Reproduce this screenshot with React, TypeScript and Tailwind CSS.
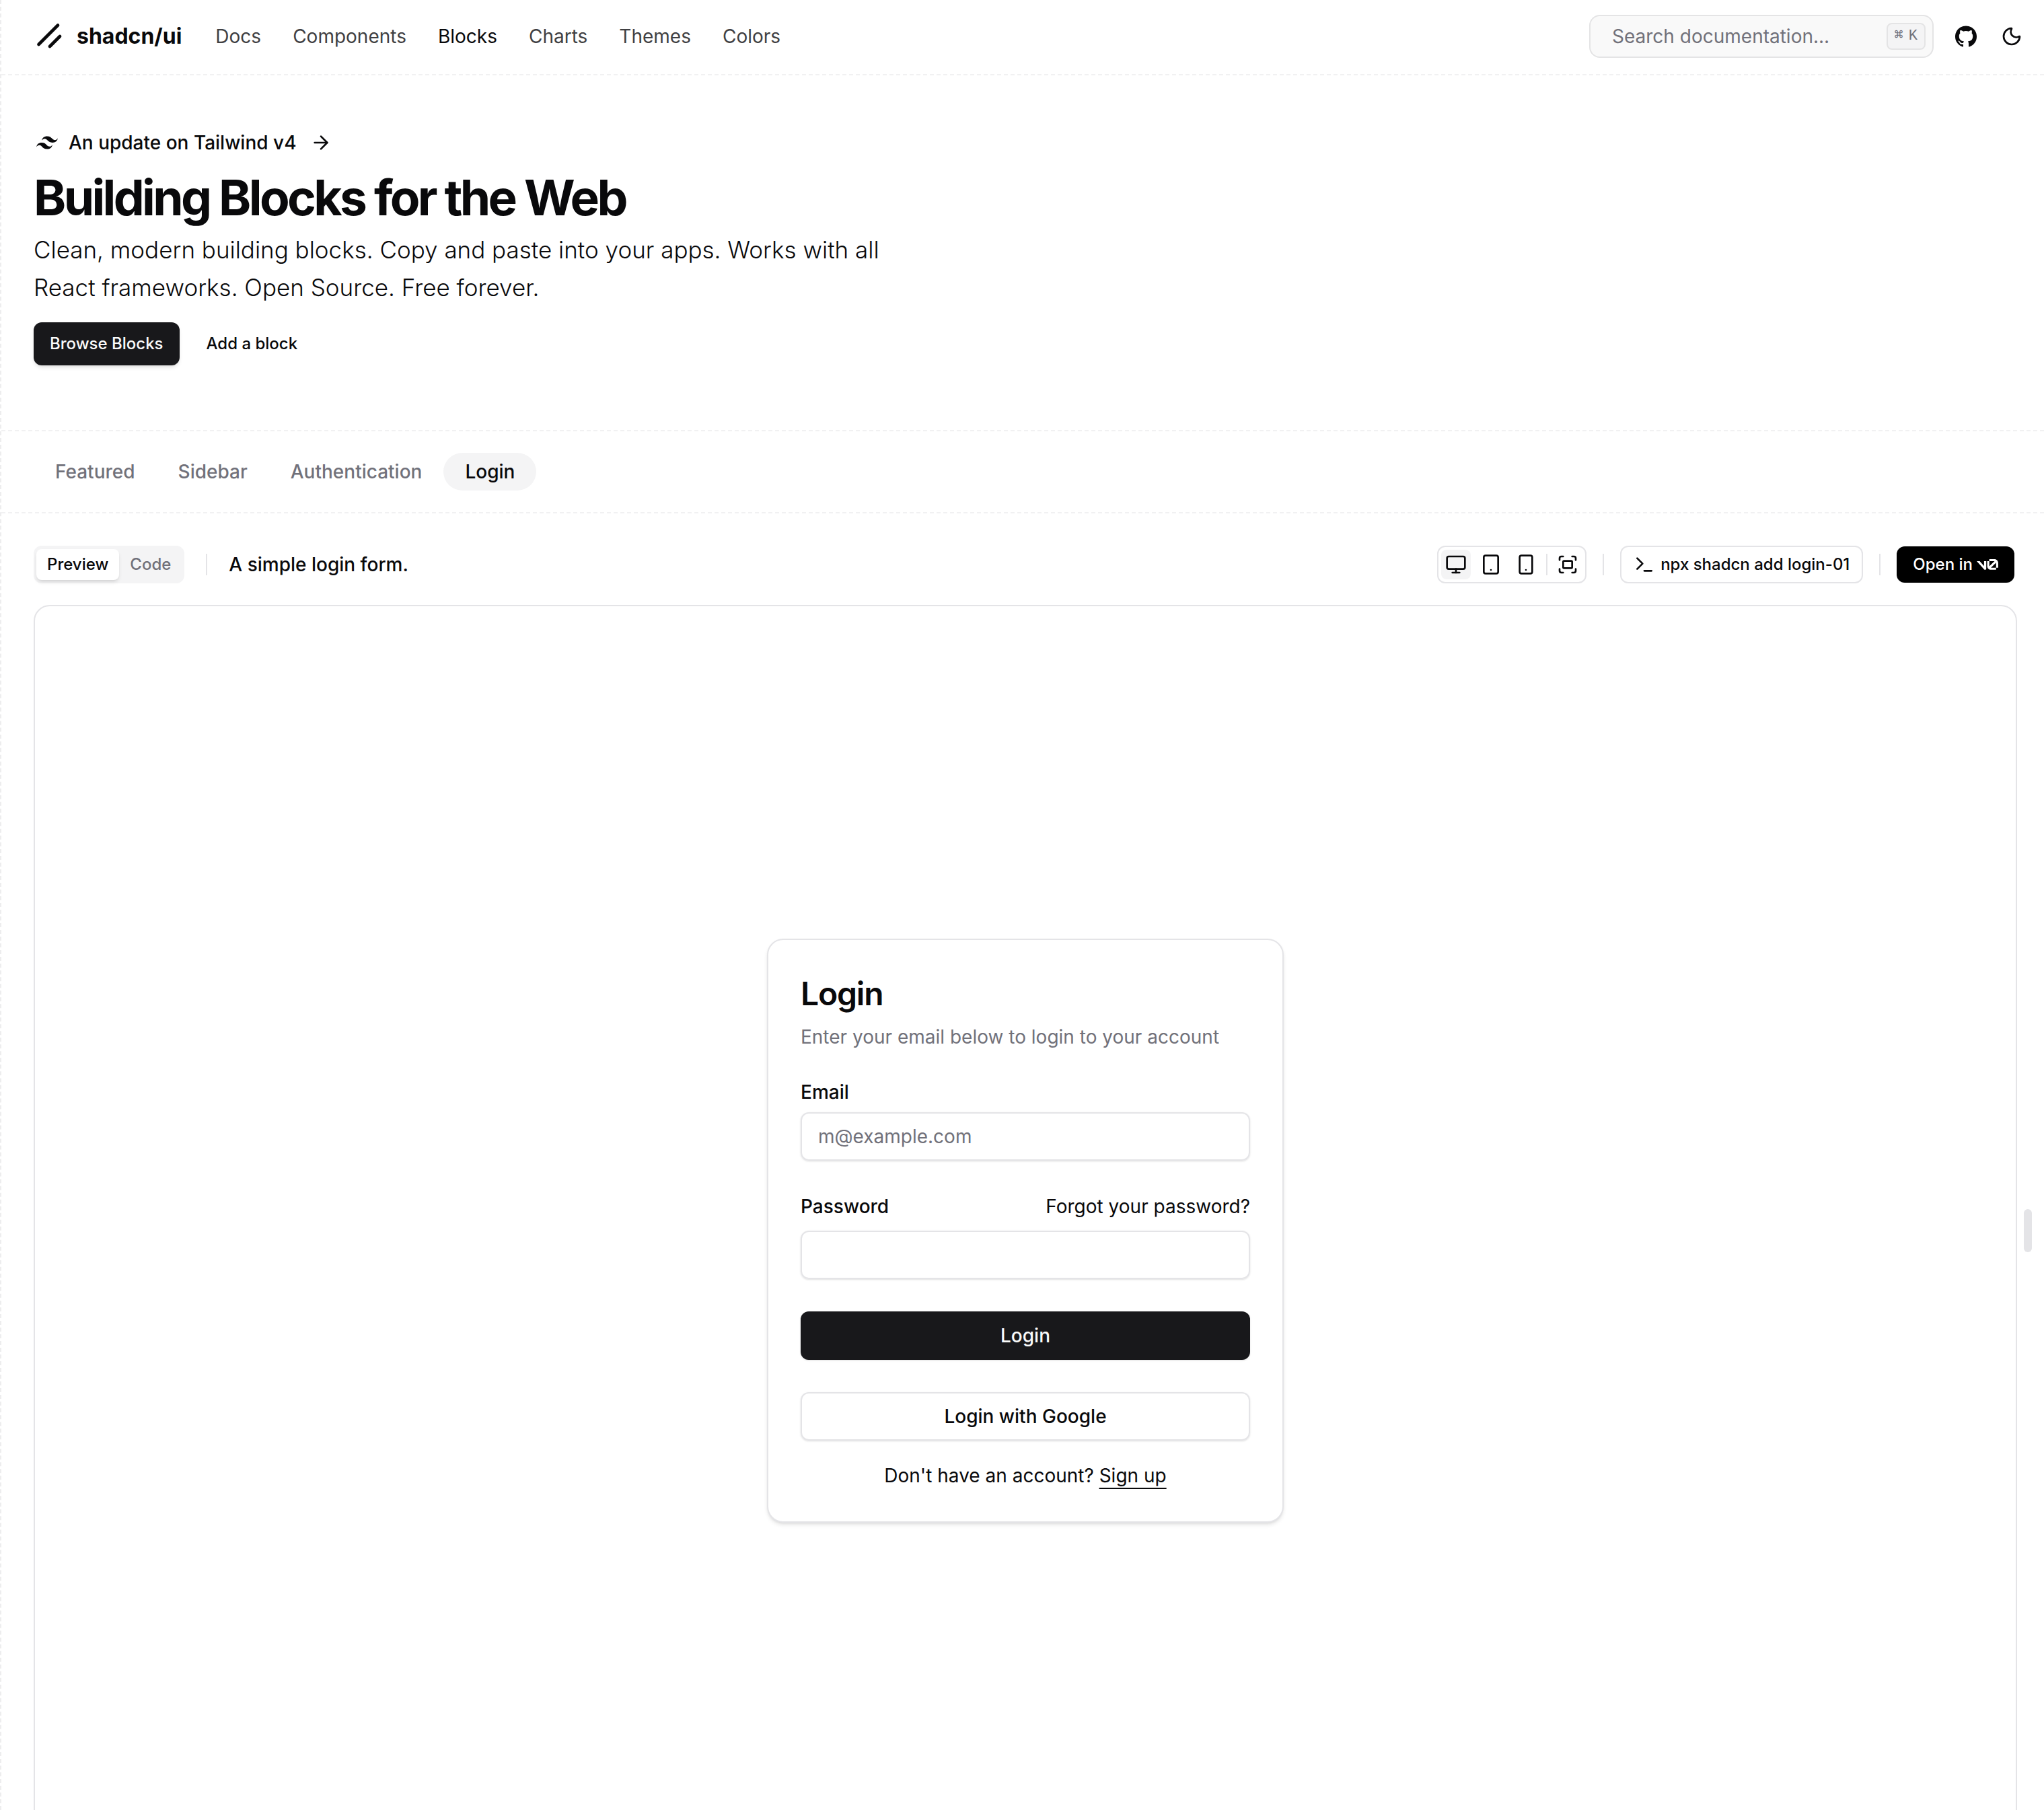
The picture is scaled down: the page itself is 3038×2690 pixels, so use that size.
import { ArrowRight, Fullscreen, Monitor, Moon, Smartphone, Tablet, Terminal } from "lucide-react";

const navLinks = ["Docs", "Components", "Blocks", "Charts", "Themes", "Colors"];
const categories = ["Featured", "Sidebar", "Authentication", "Login"];

function BrandMark() {
  return (
    <svg viewBox="0 0 256 256" className="size-12" fill="none" stroke="currentColor" strokeWidth="25" strokeLinecap="round" aria-hidden="true">
      <line x1="208" y1="128" x2="128" y2="208" />
      <line x1="192" y1="40" x2="40" y2="192" />
    </svg>
  );
}

function TailwindMark() {
  return (
    <svg viewBox="0 0 24 24" className="size-8" fill="currentColor" aria-hidden="true">
      <path d="M12.001,4.8c-3.2,0-5.2,1.6-6,4.8c1.2-1.6,2.6-2.2,4.2-1.8c0.913,0.228,1.565,0.89,2.288,1.624 C13.666,10.618,15.027,12,18.001,12c3.2,0,5.2-1.6,6-4.8c-1.2,1.6-2.6,2.2-4.2,1.8c-0.913-0.228-1.565-0.89-2.288-1.624 C16.337,6.182,14.976,4.8,12.001,4.8z M6.001,12c-3.2,0-5.2,1.6-6,4.8c1.2-1.6,2.6-2.2,4.2-1.8c0.913,0.228,1.565,0.89,2.288,1.624 c1.177,1.194,2.538,2.576,5.512,2.576c3.2,0,5.2-1.6,6-4.8c-1.2,1.6-2.6,2.2-4.2,1.8c-0.913-0.228-1.565-0.89-2.288-1.624 C10.337,13.382,8.976,12,6.001,12z" />
    </svg>
  );
}

function GitHubMark() {
  return (
    <svg viewBox="0 0 438.549 438.549" className="size-8" fill="currentColor" aria-hidden="true">
      <path d="M409.132 114.573c-19.608-33.596-46.205-60.194-79.798-79.8-33.598-19.607-70.277-29.408-110.063-29.408-39.781 0-76.472 9.804-110.063 29.408-33.596 19.605-60.192 46.204-79.8 79.8C9.803 148.168 0 184.854 0 224.63c0 47.78 13.94 90.745 41.827 128.906 27.884 38.164 63.906 64.572 108.063 79.227 5.14.954 8.945.283 11.419-1.996 2.475-2.282 3.711-5.14 3.711-8.562 0-.571-.049-5.708-.144-15.417a2549.81 2549.81 0 01-.144-25.406l-6.567 1.136c-4.187.767-9.469 1.092-15.846 1-6.374-.089-12.991-.757-19.842-1.999-6.854-1.231-13.229-4.086-19.13-8.559-5.898-4.473-10.085-10.328-12.56-17.556l-2.855-6.57c-1.903-4.374-4.899-9.233-8.992-14.559-4.093-5.331-8.232-8.945-12.419-10.848l-1.999-1.431c-1.332-.951-2.568-2.098-3.711-3.429-1.142-1.331-1.997-2.663-2.568-3.997-.572-1.335-.098-2.43 1.427-3.289 1.525-.859 4.281-1.276 8.28-1.276l5.708.853c3.807.763 8.516 3.042 14.133 6.851 5.614 3.806 10.229 8.754 13.846 14.842 4.38 7.806 9.657 13.754 15.846 17.847 6.184 4.093 12.419 6.136 18.699 6.136 6.28 0 11.704-.476 16.274-1.423 4.565-.952 8.848-2.383 12.847-4.285 1.713-12.758 6.377-22.559 13.988-29.41-10.848-1.14-20.601-2.857-29.264-5.14-8.658-2.286-17.605-5.996-26.835-11.14-9.235-5.137-16.896-11.516-22.985-19.126-6.09-7.614-11.088-17.61-14.987-29.979-3.901-12.374-5.852-26.648-5.852-42.826 0-23.035 7.52-42.637 22.557-58.817-7.044-17.318-6.379-36.732 1.997-58.24 5.52-1.715 13.706-.428 24.554 3.853 10.85 4.283 18.794 7.952 23.84 10.994 5.046 3.041 9.089 5.618 12.135 7.708 17.705-4.947 35.976-7.421 54.818-7.421s37.117 2.474 54.823 7.421l10.849-6.849c7.419-4.57 16.18-8.758 26.262-12.565 10.088-3.805 17.802-4.853 23.134-3.138 8.562 21.509 9.325 40.922 2.279 58.24 15.036 16.18 22.559 35.787 22.559 58.817 0 16.178-1.958 30.497-5.853 42.966-3.9 12.471-8.941 22.457-15.125 29.979-6.191 7.521-13.901 13.85-23.131 18.986-9.232 5.14-18.182 8.85-26.84 11.136-8.662 2.286-18.415 4.004-29.263 5.146 9.894 8.562 14.842 22.077 14.842 40.539v60.237c0 3.422 1.19 6.279 3.572 8.562 2.379 2.279 6.136 2.95 11.276 1.995 44.163-14.653 80.185-41.062 108.068-79.226 27.88-38.161 41.825-81.126 41.825-128.906-.01-39.771-9.818-76.454-29.414-110.049z" />
    </svg>
  );
}

function V0Mark() {
  return (
    <svg viewBox="0 0 40 20" className="h-8 w-8" fill="currentColor" aria-label="v0">
      <path d="M23.3919 0H32.9188C36.7819 0 39.9136 3.13165 39.9136 6.99475V16.0805H36.0006V6.99475C36.0006 6.90167 35.9969 6.80925 35.9898 6.71766L26.4628 16.079C26.4949 16.08 26.5272 16.0805 26.5595 16.0805H36.0006V19.7762H26.5595C22.6964 19.7762 19.4788 16.6139 19.4788 12.7508V3.68923H23.3919V12.7508C23.3919 12.9253 23.4054 13.0977 23.4316 13.2668L33.1682 3.6995C33.0861 3.6927 33.003 3.68923 32.9188 3.68923H23.3919V0Z" />
      <path d="M13.7688 19.0956L0 3.68759H5.53933L13.6231 12.7337V3.68759H17.7535V17.5746C17.7535 19.6705 15.1654 20.6584 13.7688 19.0956Z" />
    </svg>
  );
}

function Header() {
  return (
    <header className="flex h-28 items-center border-b-2 border-dashed border-[#f1f1f2] pr-4 pb-0.5 pl-12">
      <a href="#" className="mr-[50px] flex items-center gap-4">
        <BrandMark />
        <span className="text-[32px] leading-10 font-bold">shadcn/ui</span>
      </a>
      <nav className="flex items-center gap-[47px] text-[28px] leading-10">
        {navLinks.map((label) => (
          <a key={label} href="#" className={label === "Blocks" ? "text-[#09090b]" : "text-[#3f3f42]"}>
            {label}
          </a>
        ))}
      </nav>
      <button className="ml-auto flex h-16 w-[512px] items-center justify-between rounded-2xl border-2 border-[#e4e4e5] bg-[#f9f9f9] pr-2.5 pl-8 text-[28px] text-[#71717a]">
        <span>Search documentation...</span>
        <kbd className="flex h-10 items-center gap-2 rounded-lg border-2 border-[#e4e4e5] bg-[#f4f4f5] px-2.5 font-['Liberation_Mono',monospace] text-[22px] leading-6">
          <span>⌘</span>
          <span>K</span>
        </kbd>
      </button>
      <a href="#" aria-label="GitHub" className="ml-4 flex size-16 items-center justify-center">
        <GitHubMark />
      </a>
      <button aria-label="Toggle theme" className="ml-1 flex size-16 items-center justify-center">
        <Moon className="size-8" />
      </button>
    </header>
  );
}

function Hero() {
  return (
    <section className="flex flex-col items-start border-b-2 border-dashed border-[#f1f1f2] px-12 pt-20 pb-24">
      <a href="#" className="flex h-10 items-center text-[28px] leading-10 font-medium">
        <span className="ml-1 flex">
          <TailwindMark />
        </span>
        <span className="ml-4">An update on Tailwind v4</span>
        <ArrowRight className="ml-5 size-8" />
      </a>
      <h1 className="mt-5 text-[73px] leading-[84px] font-bold tracking-tighter">Building Blocks for the Web</h1>
      <p className="mt-[7px] max-w-[1344px] text-[35px] leading-14 font-light">
        Clean, modern building blocks. Copy and paste into your apps. Works with all React frameworks. Open Source.
        Free forever.
      </p>
      <div className="mt-6 flex gap-4 text-[24px] leading-8 font-medium">
        <a href="#" className="flex h-16 items-center rounded-xl bg-[#18181b] px-6 text-[#fafafa] shadow-md">
          Browse Blocks
        </a>
        <a href="#" className="flex h-16 items-center px-6">
          Add a block
        </a>
      </div>
    </section>
  );
}

function Categories() {
  return (
    <nav className="flex items-center border-b-2 border-dashed border-[#f1f1f2] px-12 py-8 text-[28px] font-medium">
      {categories.map((label) => (
        <a
          key={label}
          href="#"
          className={
            label === "Login"
              ? "flex h-14 items-center rounded-full bg-[#f4f4f5] px-8"
              : "flex h-14 items-center px-8 text-[#71717a]"
          }
        >
          {label}
        </a>
      ))}
    </nav>
  );
}

function Toolbar() {
  return (
    <div className="flex items-center pr-11 pl-12 text-[24px] font-medium">
      <div className="flex h-14 items-center rounded-xl bg-[#f4f4f5] px-1 text-[#71717a]">
        <button className="h-[46px] rounded-lg bg-white px-4 text-[#09090b] shadow-md">Preview</button>
        <button className="h-[46px] px-4">Code</button>
      </div>
      <div className="mx-8 h-8 w-0.5 bg-[#e4e4e7]" />
      <a href="#" className="text-[28px]">
        A simple login form.
      </a>
      <div className="ml-auto flex h-14 items-center gap-2 rounded-xl border-2 border-[#e4e4e7] px-1">
        <button aria-label="Desktop" className="flex size-11 items-center justify-center rounded-lg bg-[#f4f4f5]">
          <Monitor className="size-8" />
        </button>
        <button aria-label="Tablet" className="flex size-11 items-center justify-center">
          <Tablet className="size-8" />
        </button>
        <button aria-label="Mobile" className="flex size-11 items-center justify-center">
          <Smartphone className="size-8" />
        </button>
        <div className="h-8 w-0.5 bg-[#e4e4e7]" />
        <button aria-label="Fullscreen" className="flex size-11 items-center justify-center">
          <Fullscreen className="size-8" />
        </button>
      </div>
      <div className="mx-6 h-8 w-0.5 bg-[#e4e4e7]" />
      <button className="flex h-14 items-center gap-2 rounded-xl border-2 border-[#e4e4e7] px-4.5">
        <Terminal className="size-8" />
        npx shadcn add login-01
      </button>
      <div className="mx-6 h-8 w-0.5 bg-[#e4e4e7]" />
      <a href="#" className="flex h-[54px] items-center gap-1.5 rounded-xl bg-black px-6 text-white">
        Open in
        <V0Mark />
      </a>
    </div>
  );
}

function LoginCard() {
  const field = "h-[72px] w-full rounded-xl border-2 border-[#e4e4e7] px-6 text-[28px] shadow-sm placeholder:text-[#71717a]";
  return (
    <form className="w-[768px] rounded-3xl border-2 border-[#e4e4e7] bg-white p-12 text-[28px] leading-10 shadow-md">
      <h2 className="mt-1 text-[48px] leading-14 font-semibold tracking-tight">Login</h2>
      <p className="mt-4 text-[#71717a]">Enter your email below to login to your account</p>
      <label htmlFor="email" className="mt-12 block leading-7 font-medium">
        Email
      </label>
      <input id="email" type="email" placeholder="m@example.com" className={"mt-4 " + field} />
      <div className="mt-12 flex items-center justify-between">
        <label htmlFor="password" className="font-medium">
          Password
        </label>
        <a href="#">Forgot your password?</a>
      </div>
      <input id="password" type="password" className={"mt-4 " + field} />
      <button type="button" className="mt-12 h-[72px] w-full rounded-xl bg-[#18181b] font-medium text-[#fafafa] shadow-sm">
        Login
      </button>
      <button type="button" className="mt-12 h-[72px] w-full rounded-xl border-2 border-[#e4e4e7] font-medium shadow-sm">
        Login with Google
      </button>
      <p className="mt-8 text-center">
        Don't have an account?{" "}
        <a href="#" className="underline decoration-2 underline-offset-8">
          Sign up
        </a>
      </p>
    </form>
  );
}

export default function App() {
  return (
    <div className="h-screen overflow-hidden border-l-2 border-dashed border-[#ededee] bg-white font-['Inter',sans-serif] text-[#09090b] antialiased">
      <Header />
      <main>
        <Hero />
        <Categories />
        <section className="flex flex-col gap-8 pt-12">
          <Toolbar />
          <div className="flex items-center pr-4.5 pl-12">
            <div className="flex h-[1860px] flex-1 items-center justify-center rounded-3xl border-2 border-[#e4e4e7]">
              <LoginCard />
            </div>
            <div className="ml-2.5 h-16 w-3 rounded-full bg-[#e4e4e7]" />
          </div>
        </section>
      </main>
    </div>
  );
}
